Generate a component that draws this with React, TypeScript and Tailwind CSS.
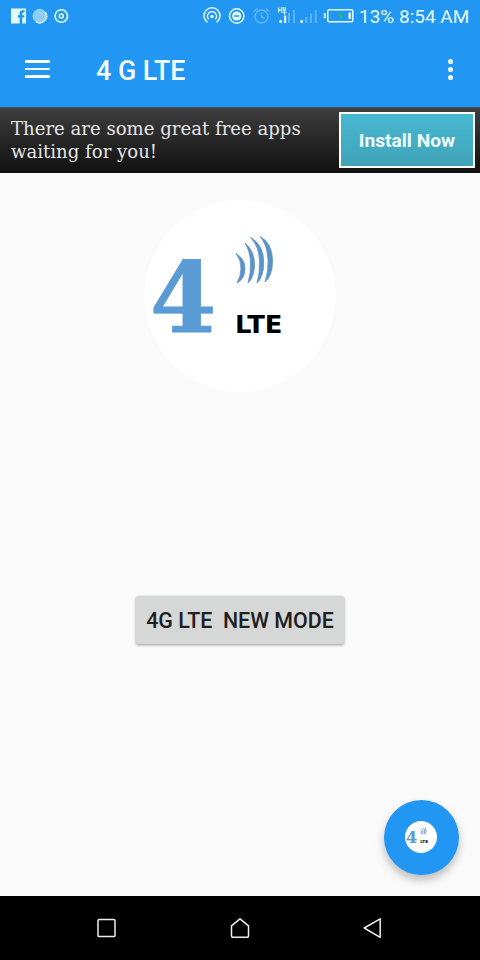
interface LogoProps {
  className: string;
}

function LteLogo({ className }: LogoProps) {
  return (
    <svg className={className} viewBox="0 0 192 192" aria-label="4G LTE">
      <circle cx="96" cy="96" r="96" fill="#fff" />
      <text x="6" y="131.5" fontSize="98" fontWeight="700" fill="#5b9bd5" stroke="#5b9bd5" strokeWidth="0.8" fontFamily='"DejaVu Serif", serif' textLength="66.5" lengthAdjust="spacingAndGlyphs">
        4
      </text>
      <g fill="#5b93c9" stroke="#5b93c9" strokeWidth="0.8">
        <path d="M92 53.5Q101 59 101 68.5Q101 79 93 83Q97 76 97 68Q97 60 92 53.5Z" />
        <path d="M101 43Q110.500 51 110.500 64Q110.500 77 104 83Q107 73 106.500 62Q106 51 101 43Z" />
        <path d="M106.500 37.500Q120 45 119.700 63Q119.500 77 113 83Q116 73 115.500 61Q115 46 106.500 37.500Z" />
        <path d="M116 36.500Q128.500 43 128.500 61Q128.500 76 121 82Q124.500 72 124 60Q123.500 45 116 36.500Z" />
      </g>
      <text x="91" y="133" fontSize="25.5" fontWeight="700" fill="#000" fontFamily='"DejaVu Sans", sans-serif' textLength="47.5" lengthAdjust="spacingAndGlyphs">
        LTE
      </text>
    </svg>
  );
}

function StatusBar() {
  return (
    <div className="flex h-8 items-center justify-between pl-2.5 pr-[11px] text-[#e3fbff]">
      <svg className="h-8 w-[60px]" viewBox="0 0 60 32" fill="none" aria-hidden="true">
        <path d="M1 8.500h15v15H12.300v-6h2v-2.300h-2v-1.400c0-.9.400-1.300 1.300-1.300h1V10.200h-1.700c-2.200 0-3.300 1.200-3.300 3.200v1.800H7.800v2.300h1.800v6H1Z" fill="currentColor" />
        <circle cx="29.700" cy="16" r="7.200" fill="#8fcdf9" />
        <path d="M35.500 12A7 7 0 0 1 26 21.800" stroke="currentColor" strokeWidth="1.200" />
        <circle cx="51.300" cy="16" r="6.200" stroke="currentColor" strokeWidth="1.600" />
        <circle cx="51.300" cy="16" r="2" stroke="currentColor" strokeWidth="1.500" />
      </svg>

      <div className="flex items-center gap-[2px]">
        <svg className="h-8 w-[154px]" viewBox="0 0 154 32" fill="none" aria-hidden="true">
          <g stroke="currentColor" strokeWidth="1.500">
            <path d="M4.400 22.300A8 8 0 1 1 13.600 22.300" />
            <path d="M5.700 19.200A4.500 4.500 0 1 1 12.300 19.200" />
            <circle cx="9" cy="16.500" r="1" fill="currentColor" />
            <circle cx="33.700" cy="16" r="7.200" />
          </g>
          <circle cx="33.700" cy="16" r="4.600" fill="currentColor" />
          <path d="M31.200 16h5" stroke="#2196f3" strokeWidth="1.500" />
          <g stroke="#62b7f7" strokeWidth="1.400">
            <circle cx="58.500" cy="16.500" r="6.500" />
            <path d="M58.500 12.500v4.200l3 1.700M50.800 11.500l3.400-3M66.200 11.500l-3.400-3" />
          </g>
          <g fill="#5cb3f7">
            <path d="M85 13h2v10h-2zM90 10h2v13h-2z" />
            <path d="M102.300 17h2v6h-2zM107 13.500h2v9.500h-2zM111.700 10h2v13h-2z" />
          </g>
          <g fill="currentColor">
            <path d="M76.500 20h2.500v3h-2.500zM81 15.500h2.200v7.500H81zM97.500 20h2.500v3h-2.500z" />
          </g>
          <path d="M75.600 7v5.500M75.600 10h3M78.600 7v5.500M80.500 7v3h2v-3M79.500 12.500h4M81.500 10.500v4" stroke="currentColor" strokeWidth="1.200" />
          <rect x="124.800" y="9.800" width="25" height="12" rx="1.200" stroke="currentColor" strokeWidth="1.500" />
          <path d="M120.800 13.300h2v5h-2zM145.500 12.500h2.600v6.500h-2.600z" fill="currentColor" />
          <path d="M138.300 10.600l-4 5.700h3l-1.500 4.800 4.700-6h-3z" fill="#20b987" />
        </svg>
        <span className="w-[110px] whitespace-nowrap pt-px font-[Roboto,sans-serif] text-[19px] leading-8">13% 8:54 AM</span>
      </div>
    </div>
  );
}

function Toolbar() {
  return (
    <header className="flex h-[75px] items-center pl-[25px] pr-[27px] text-[#f5fdff]">
      <button className="-mt-px flex w-[25px] flex-col gap-[5px]" type="button" aria-label="Open menu">
        <span className="h-[2.5px] w-full bg-current" />
        <span className="h-[2.5px] w-full bg-current" />
        <span className="h-[2.5px] w-full bg-current" />
      </button>
      <h1 className="ml-[46px] flex-1 pt-[3px] font-[Roboto,sans-serif] text-[26.8px] leading-8 font-medium">4 G LTE</h1>
      <button className="flex flex-col gap-[2.5px]" type="button" aria-label="More options">
        <span className="size-[5.500px] rounded-full bg-current" />
        <span className="size-[5.500px] rounded-full bg-current" />
        <span className="size-[5.500px] rounded-full bg-current" />
      </button>
    </header>
  );
}

function AdBanner() {
  return (
    <aside className="flex h-[66px] items-center justify-between bg-linear-to-b from-[#3f3f3f] to-[#111] pl-[11px] pr-[5px] shadow-[inset_0_1px_0_#505050]">
      <p className="whitespace-nowrap font-['DejaVu_Serif',serif] text-[18.1px] leading-[23px] text-[#e6e6e6]">
        There are some great free apps
        <br />
        waiting for you!
      </p>
      <button
        className="h-14 w-[136px] border-2 border-white bg-linear-to-b from-[#48b8d2] to-[#40a3b8] pt-[2px] font-[Roboto,sans-serif] text-[19.2px] font-bold text-[#effdff]"
        type="button"
      >
        Install Now
      </button>
    </aside>
  );
}

function NavigationBar() {
  return (
    <nav className="flex h-16 items-center justify-between bg-black px-[94px]">
      <svg className="size-6" viewBox="0 0 24 24" fill="none" stroke="#eee" strokeWidth="1.500" aria-label="Recent apps">
        <rect x="4" y="3.600" width="17" height="17" rx="1.200" />
      </svg>
      <svg className="size-6" viewBox="0 0 24 24" fill="none" stroke="#eee" strokeWidth="1.500" strokeLinejoin="round" aria-label="Home">
        <path d="M3.500 9.800L12 2.800l8.500 7v10.200q0 1.200-1.200 1.200H4.700q-1.200 0-1.200-1.200Z" />
      </svg>
      <svg className="size-6" viewBox="0 0 24 24" fill="none" stroke="#eee" strokeWidth="1.500" strokeLinejoin="round" aria-label="Back">
        <path d="M18.200 2.800v18.500L2.200 12Z" />
      </svg>
    </nav>
  );
}

export default function App() {
  return (
    <div className="flex h-[960px] w-[480px] flex-col overflow-hidden bg-[#fafafa]">
      <div className="bg-[#2196f3]">
        <StatusBar />
        <Toolbar />
      </div>
      <AdBanner />
      <main className="flex flex-1 flex-col items-center pt-[27px]">
        <LteLogo className="size-48" />
        <button
          className="mt-[204px] h-[48px] w-[208px] rounded-[2px] bg-[#d6d7d7] pt-[2px] font-[Roboto,sans-serif] text-[21.4px] font-medium whitespace-pre text-[#202020] shadow-[0_1px_3px_rgba(0,0,0,0.4)]"
          type="button"
        >
          {"4G LTE  NEW MODE"}
        </button>
        <button
          className="mt-auto mr-[21.5px] mb-[21.5px] grid size-[75px] place-items-center self-end rounded-full bg-[#2196f3] shadow-[0_5px_9px_rgba(0,0,0,0.25)]"
          type="button"
          aria-label="Switch to 4G LTE"
        >
          <LteLogo className="size-8" />
        </button>
      </main>
      <NavigationBar />
    </div>
  );
}
